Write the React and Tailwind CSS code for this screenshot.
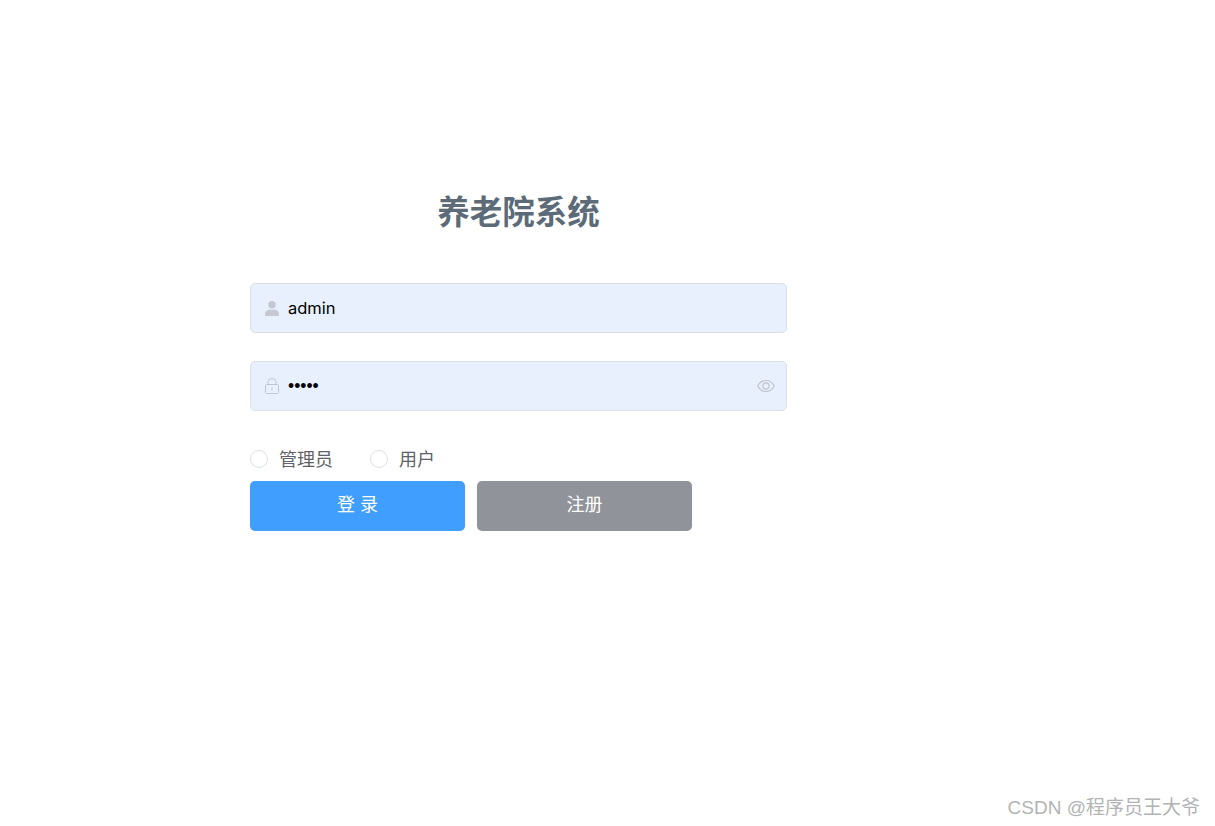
const CJK = "font-['Inter','Noto_Sans_CJK_SC',sans-serif]";

function UserIcon() {
  return (
    <svg width="14" height="15" viewBox="0 0 14 15" className="shrink-0" fill="#c4c8d2">
      <circle cx="7" cy="3.800" r="3.800" />
      <path d="M0 13.700c0-3.400 2.200-5 4.400-5h5.200c2.200 0 4.400 1.600 4.400 5 0 .8-.4 1.300-1 1.300H1c-.6 0-1-.5-1-1.300z" />
    </svg>
  );
}

function LockIcon() {
  return (
    <svg width="14" height="16" viewBox="0 0 14 16" className="shrink-0" fill="none" stroke="#bfc6d2" strokeWidth="1">
      <rect x="0.5" y="6.500" width="13" height="9" rx="1" />
      <path d="M3 6.500V4.200a4 3.700 0 0 1 8 0v2.300" />
      <path d="M7 9.500v3" />
    </svg>
  );
}

function EyeIcon() {
  return (
    <svg width="18" height="14" viewBox="0 0 18 14" fill="none" stroke="#bfc3cd" strokeWidth="1.200">
      <path d="M.7 7C2.600 3.400 5.600 1.500 9 1.500s6.400 1.900 8.300 5.500c-1.900 3.600-4.900 5.500-8.300 5.500S2.600 10.600.7 7z" />
      <circle cx="9" cy="7" r="3.100" />
    </svg>
  );
}

function Field({ icon, type, value, suffix, inputClass }) {
  return (
    <div className="flex h-[50px] items-center rounded-[5px] border border-[#dcdfe6] bg-[#e8f0fe] pl-[14px] pr-[11px]">
      {icon}
      <input
        type={type}
        value={value}
        readOnly
        className={`ml-[9px] min-w-0 flex-1 bg-transparent text-black outline-none ${inputClass}`}
      />
      {suffix}
    </div>
  );
}

function Radio({ label }) {
  return (
    <label className="flex items-center">
      <span className="h-[18px] w-[18px] rounded-full border border-[#dcdfe6] bg-white" />
      <span className={`ml-[11px] pt-[2px] text-[18px] leading-[24px] text-[#606266] ${CJK}`}>{label}</span>
    </label>
  );
}

export default function App() {
  return (
    <div className="relative h-[826px] w-full overflow-hidden bg-white">
      <form className="ml-[250px] w-[537px] pt-[187px]">
        <h3 className={`mb-[45px] text-center text-[32.500px] font-bold leading-[51px] text-[#5c6b77] ${CJK}`}>
          养老院系统
        </h3>
        <div className="mb-[28px]">
          <Field icon={<UserIcon />} type="text" value="admin" inputClass="text-[16.500px] font-['Inter',sans-serif]" />
        </div>
        <div className="mb-[36px]">
          <Field
            icon={<LockIcon />}
            type="password"
            value="admin"
            suffix={<EyeIcon />}
            inputClass="text-[17.500px] font-['Liberation_Sans',sans-serif]"
          />
        </div>
        <div className="flex h-[24px] items-center gap-[37px]">
          <Radio label="管理员" />
          <Radio label="用户" />
        </div>
        <div className="mt-[10px] flex gap-[12px]">
          <button type="button" className={`h-[50px] w-[215px] rounded-[5px] bg-[#409eff] pb-[4px] text-[18px] text-white ${CJK}`}>
            登 录
          </button>
          <button type="button" className={`h-[50px] w-[215px] rounded-[5px] bg-[#909399] pb-[4px] text-[18px] text-white ${CJK}`}>
            注册
          </button>
        </div>
      </form>
      <div className="absolute bottom-[5px] right-[15px] text-[19px] leading-[26px] text-[#b3b3b3] font-['Liberation_Sans','Noto_Sans_CJK_SC',sans-serif]">
        CSDN @程序员王大爷
      </div>
    </div>
  );
}
